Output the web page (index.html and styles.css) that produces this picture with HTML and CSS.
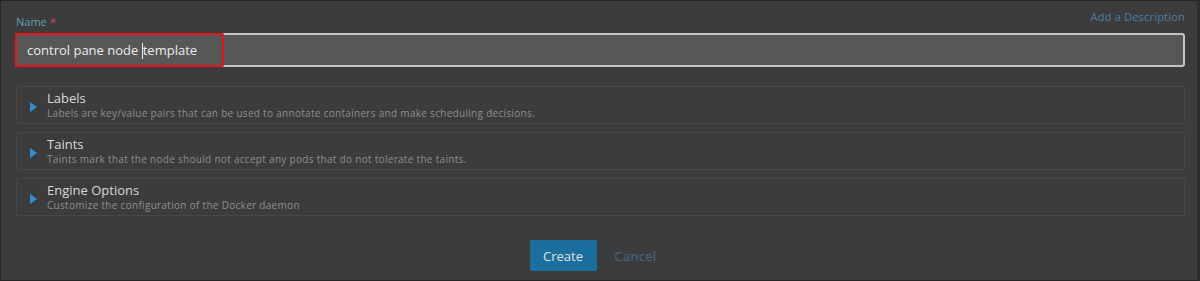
FILE: index.html
```html
<!DOCTYPE html>
<html lang="en">
<head>
    <meta charset="UTF-8">
    <title>Add Node Template</title>
    <link rel="stylesheet" href="styles.css">
</head>
<body>
    <div class="frame">
        <div class="name-row">
            <label class="name-label">Name <span class="req">*</span></label>
            <a class="add-desc">Add a Description</a>
        </div>
        <div class="input-wrap">
            <div class="name-input">control pane node <span class="caret"></span>template</div>
            <div class="highlight"></div>
        </div>

        <div class="section">
            <span class="arrow"></span>
            <div>
                <div class="sec-title">Labels</div>
                <div class="sec-desc">Labels are key/value pairs that can be used to annotate containers and make scheduling decisions.</div>
            </div>
        </div>
        <div class="section">
            <span class="arrow"></span>
            <div>
                <div class="sec-title">Taints</div>
                <div class="sec-desc">Taints mark that the node should not accept any pods that do not tolerate the taints.</div>
            </div>
        </div>
        <div class="section">
            <span class="arrow"></span>
            <div>
                <div class="sec-title">Engine Options</div>
                <div class="sec-desc">Customize the configuration of the Docker daemon</div>
            </div>
        </div>

        <div class="actions">
            <button class="btn-create">Create</button>
            <a class="btn-cancel">Cancel</a>
        </div>
    </div>
</body>
</html>
```
FILE: styles.css
```css
html, body {
    margin: 0;
    background: #2b2b2b;
}
body {
    font-family: "Open Sans", Lato, sans-serif;
}
.frame {
    box-sizing: border-box;
    width: 1200px;
    height: 281px;
    border: 1px solid #262626;
    border-right: 3px solid #2e2e2e;
    background: #3c3c3c;
    padding: 7px 12px 0 14px;
}
.name-row {
    display: flex;
    justify-content: space-between;
    align-items: flex-end;
    height: 24px;
}
.name-label {
    font-size: 11px;
    color: #62a0b3;
    margin-left: 1px;
    margin-bottom: 3px;
}
.req {
    color: #d2455a;
}
.add-desc {
    font-size: 11px;
    color: #4a7fa6;
    letter-spacing: 0.2px;
    margin-bottom: 8px;
}
.input-wrap {
    position: relative;
    margin-top: 1px;
}
.name-input {
    box-sizing: border-box;
    height: 34px;
    background: #575757;
    border: 2px solid #c4c4c4;
    border-radius: 3px;
    color: #ececec;
    font-size: 13px;
    padding: 6px 10px;
}
.caret {
    display: inline-block;
    width: 1px;
    height: 16px;
    background: #eee;
    vertical-align: -4px;
}
.highlight {
    position: absolute;
    left: 0;
    top: 0;
    width: 209px;
    height: 34px;
    box-sizing: border-box;
    border: 2px solid #e8141c;
    border-radius: 2px;
}
.section {
    display: flex;
    align-items: center;
    box-sizing: border-box;
    height: 38px;
    margin-top: 8px;
    margin-left: 1px;
    border: 1px solid #474747;
    border-radius: 2px;
    padding: 0 10px 0 13px;
}
.input-wrap + .section {
    margin-top: 19px;
}
.arrow {
    width: 0;
    height: 0;
    border-top: 5px solid transparent;
    border-bottom: 5px solid transparent;
    border-left: 7px solid #2f8fd6;
    margin-right: 10px;
    margin-top: 4px;
}
.sec-title {
    font-size: 13px;
    color: #d8d8d8;
    line-height: 15px;
}
.sec-desc {
    font-size: 10px;
    color: #8e8e8e;
    letter-spacing: 0.3px;
    line-height: 14px;
}
.actions {
    display: flex;
    justify-content: center;
    align-items: center;
    margin-top: 24px;
    padding-right: 14px;
}
.btn-create {
    font-family: inherit;
    font-size: 13px;
    color: #e2e2e2;
    background: #1b6f9e;
    border: none;
    border-radius: 2px;
    width: 67px;
    height: 31px;
    cursor: pointer;
}
.btn-cancel {
    font-size: 13px;
    color: #3c6a8f;
    letter-spacing: 0.3px;
    margin-left: 18px;
}
```
